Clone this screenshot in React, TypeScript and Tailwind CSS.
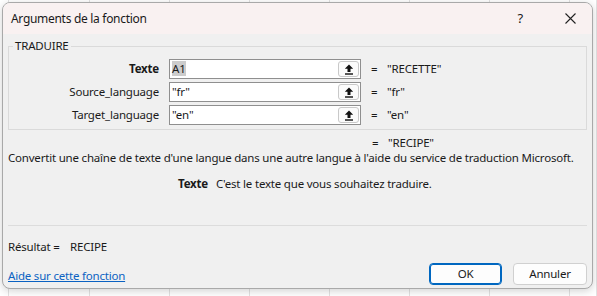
import React from 'react';

const FONT = '[font-family:"Noto_Sans","Open_Sans",sans-serif]';

type Arg = { name: string; value: string; result: string; bold?: boolean; selected?: boolean };

const ARGS: Arg[] = [
  { name: 'Texte', value: 'A1', result: '"RECETTE"', bold: true, selected: true },
  { name: 'Source_language', value: '"fr"', result: '"fr"' },
  { name: 'Target_language', value: '"en"', result: '"en"' },
];

function CollapseIcon() {
  return (
    <svg width="10" height="11" viewBox="0 0 10 11" className="block">
      <path d="M5 0.5 L9.2 4.8 H6.5 V8 H3.5 V4.8 H0.8 Z" fill="#111" />
      <rect x="1" y="9.3" width="8" height="1.4" fill="#111" />
    </svg>
  );
}

function ArgRow({ arg }: { arg: Arg }) {
  return (
    <div className="flex h-[20px] items-center">
      <div className={`w-[150px] text-right ${arg.bold ? 'font-bold' : ''}`}>{arg.name}</div>
      <div className="ml-[10px] flex h-[20px] w-[192px] items-center border border-[#8f8f8f] bg-white">
        <span className="ml-[2px] flex-1">
          <span className={arg.selected ? 'bg-[#cccccc]' : ''}>{arg.value}</span>
        </span>
        <div className="mr-[1px] flex h-[16px] w-[21px] items-center justify-center rounded-[3px] border border-[#c9c9c9] bg-[#fbfbfb]">
          <CollapseIcon />
        </div>
      </div>
      <span className="ml-[10px] w-[14px]">=</span>
      <span className="ml-[2px]">{arg.result}</span>
    </div>
  );
}

function SheetBackground() {
  const cols = [9, 81, 80, 80, 80, 80, 80, 80, 27];
  return (
    <div className="flex h-full w-full">
      {cols.map((w, i) => (
        <div key={i} className="h-full shrink-0 border-r border-[#e2e2e2]" style={{ width: w }} />
      ))}
    </div>
  );
}

export default function App() {
  return (
    <div
      className={`relative h-[296px] w-[597px] overflow-hidden bg-white text-[11.5px] tracking-[-0.2px] text-[#1a1a1a] ${FONT}`}
    >
      <SheetBackground />
      <div className="absolute left-[2px] top-[2px] flex h-[287px] w-[591px] flex-col overflow-hidden rounded-[8px] border border-[#a9a9a9] bg-[#f0f0f0] shadow-[0_2px_8px_rgba(0,0,0,0.18)]">
        {/* title bar */}
        <div className="flex h-[31px] shrink-0 items-center bg-[#f9f1f1] pl-[8px]">
          <span className="text-[12px] tracking-[-0.3px]">Arguments de la fonction</span>
          <span className="ml-auto mr-[42px] text-[13px]">?</span>
          <svg width="11" height="11" viewBox="0 0 11 11" className="mr-[16px]">
            <path d="M0.5 0.5 L10.5 10.5 M10.5 0.5 L0.5 10.5" stroke="#222" strokeWidth="1.1" />
          </svg>
        </div>

        {/* body */}
        <div className="flex flex-1 flex-col px-[5px]">
          <fieldset className="mt-[5px] border border-[#dadada] pb-[4px] pt-[6px]">
            <legend className="ml-[4px] px-[2px] leading-[14px]">TRADUIRE</legend>
            <div className="flex flex-col gap-[3px]">
              {ARGS.map((a) => (
                <ArgRow key={a.name} arg={a} />
              ))}
            </div>
          </fieldset>

          <div className="mt-[5px] flex h-[15px] items-center pl-[364px]">
            <span className="w-[14px]">=</span>
            <span className="ml-[2px]">"RECIPE"</span>
          </div>
          <div className="flex h-[15px] items-center whitespace-nowrap">
            Convertit une chaîne de texte d'une langue dans une autre langue à l'aide du service de traduction Microsoft.
          </div>
          <div className="mt-[11px] flex h-[15px] items-center">
            <span className="w-[200px] text-right font-bold">Texte</span>
            <span className="ml-[8px]">C'est le texte que vous souhaitez traduire.</span>
          </div>

          <div className="mt-[34px] border-t border-[#dcdcdc]" />

          <div className="mt-[13px] flex h-[15px] items-center">
            <span className="w-[62px]">Résultat =</span>
            <span>RECIPE</span>
          </div>

          <div className="mb-[3px] mt-auto flex items-end">
            <a className="mb-[1px] text-[#0b62c2] underline" href="#">
              Aide sur cette fonction
            </a>
            <div className="ml-auto flex gap-[11px]">
              <button
                type="button"
                className="h-[22px] w-[73px] rounded-[4px] border border-[#0067c0] bg-[#fdfdfd] shadow-[inset_0_0_0_1px_#0067c0]"
              >
                OK
              </button>
              <button type="button" className="h-[22px] w-[74px] rounded-[4px] border border-[#d0d0d0] bg-[#fdfdfd]">
                Annuler
              </button>
            </div>
          </div>
        </div>
      </div>
    </div>
  );
}
